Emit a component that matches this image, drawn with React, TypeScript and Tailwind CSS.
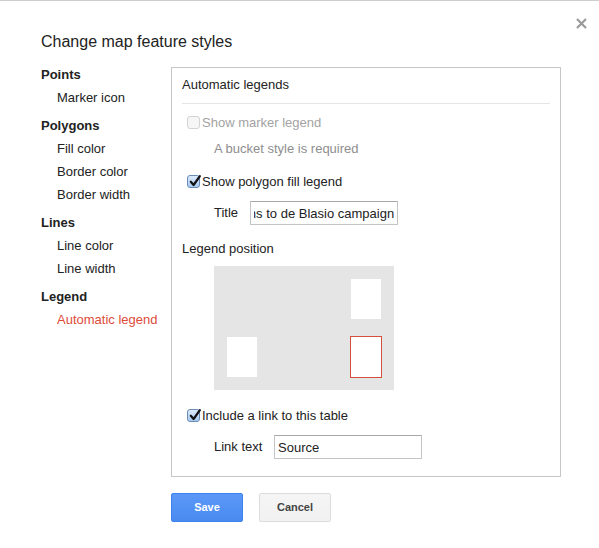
import { useEffect, useRef, type ReactNode } from 'react'

// Left-hand navigation of the style dialog
const NAV: { title: string; items: string[] }[] = [
  { title: 'Points', items: ['Marker icon'] },
  { title: 'Polygons', items: ['Fill color', 'Border color', 'Border width'] },
  { title: 'Lines', items: ['Line color', 'Line width'] },
  { title: 'Legend', items: ['Automatic legend'] },
]
const ACTIVE = 'Automatic legend'

function Check({ checked, disabled }: { checked?: boolean; disabled?: boolean }) {
  if (disabled) {
    return <span className="block h-[13px] w-[13px] rounded-[3px] border border-[#d3d3d3] bg-[#f6f6f6]" />
  }
  return (
    <span className="relative block h-[13px] w-[13px] rounded-[3px] border border-[#6a8bb3] bg-gradient-to-b from-[#dcebfc] to-[#a9cbf2]">
      {checked && (
        <svg viewBox="0 0 13 13" className="absolute -top-[2px] left-[0px] h-[14px] w-[14px]">
          <path d="M2.6 7.2 L5.2 10.2 L11 2" fill="none" stroke="#141414" strokeWidth="2.1" strokeLinecap="round" strokeLinejoin="round" />
        </svg>
      )}
    </span>
  )
}

function CheckRow({ checked, disabled, children }: { checked?: boolean; disabled?: boolean; children: ReactNode }) {
  return (
    <div className={`flex h-[23px] items-center pl-[5px] leading-[23px] ${disabled ? 'text-[#a3a3a3]' : ''}`}>
      <Check checked={checked} disabled={disabled} />
      <span className="ml-[2px]">{children}</span>
    </div>
  )
}

// text input; long values stay scrolled to their end like a field the caret just left
function Field({ label, labelW, value, scrollEnd }: { label: string; labelW: string; value: string; scrollEnd?: boolean }) {
  const ref = useRef<HTMLInputElement>(null)
  useEffect(() => {
    if (scrollEnd && ref.current) ref.current.scrollLeft = ref.current.scrollWidth
  }, [scrollEnd, value])
  return (
    <div className="flex h-[24px] items-center pl-[32px]">
      <span className={labelW}>{label}</span>
      <input
        ref={ref}
        defaultValue={value}
        className="h-[24px] w-[148px] border border-[#c4c4c4] border-t-[#a8a8a8] bg-white px-[3px] text-[13px] text-[#222] outline-none"
      />
    </div>
  )
}

export default function App() {
  return (
    <div
      className="relative h-[548px] w-[599px] border-t border-[#cdcdcd] bg-white text-[13px] text-[#222]"
      style={{ fontFamily: '"Liberation Sans", Arial, sans-serif' }}
    >
      <button className="absolute right-[12px] top-[17px] p-0" aria-label="Close">
        <svg viewBox="0 0 11 11" className="h-[11px] w-[11px]">
          <path d="M1 1 L10 10 M10 1 L1 10" stroke="#9a9a9a" strokeWidth="2.2" />
        </svg>
      </button>

      <div className="pl-[41px] pt-[31px]">
        <h1 className="text-[16px] leading-[20px] font-normal">Change map feature styles</h1>

        <div className="mt-[11px] flex">
          <nav className="w-[130px]">
            {NAV.map((g, i) => (
              <div key={g.title} className={i > 0 ? 'mt-[5px]' : ''}>
                <div className="h-[23px] font-bold leading-[23px]">{g.title}</div>
                {g.items.map((it) => (
                  <div
                    key={it}
                    className={`h-[23px] pl-[16px] leading-[23px] ${it === ACTIVE ? 'text-[#dd4b39]' : ''}`}
                  >
                    {it}
                  </div>
                ))}
              </div>
            ))}
          </nav>

          <div className="mt-[4px]">
            <section className="h-[410px] w-[390px] border border-[#c6c6c6] px-[10px] pt-[5px]">
              <div className="h-[23px] leading-[23px]">Automatic legends</div>
              <div className="mt-[7px] border-t border-[#e6e6e6]" />

              <div className="mt-[7px]">
                <CheckRow disabled>Show marker legend</CheckRow>
              </div>
              <div className="mt-[3px] h-[23px] pl-[32px] leading-[23px] text-[#8e8e8e]">A bucket style is required</div>

              <div className="mt-[10px]">
                <CheckRow checked>Show polygon fill legend</CheckRow>
              </div>
              <div className="mt-[8px]">
                <Field label="Title" labelW="w-[36px]" value="Contributions to de Blasio campaign" scrollEnd />
              </div>

              <div className="mt-[12px] h-[23px] leading-[23px]">Legend position</div>
              <div className="ml-[32px] mt-[6px] grid h-[124px] w-[180px] grid-cols-[30px_30px] grid-rows-[40px_40px] content-between justify-between bg-[#e5e5e5] p-[13px]">
                <div />
                <div className="bg-white" />
                <div className="bg-white" />
                <div className="bg-white outline outline-1 outline-[#d4503c]" />
              </div>

              <div className="mt-[14px]">
                <CheckRow checked>Include a link to this table</CheckRow>
              </div>
              <div className="mt-[8px]">
                <Field label="Link text" labelW="w-[60px]" value="Source" />
              </div>
            </section>

            <div className="mt-[16px] flex gap-[16px]">
              <button className="h-[29px] w-[72px] rounded-[2px] border border-[#3c82f0] bg-gradient-to-b from-[#5b98f7] to-[#4a8af0] text-[11px] font-bold text-white">
                Save
              </button>
              <button className="h-[29px] w-[72px] rounded-[2px] border border-[#dcdcdc] bg-gradient-to-b from-[#f5f5f5] to-[#f1f1f1] text-[11px] font-bold text-[#444]">
                Cancel
              </button>
            </div>
          </div>
        </div>
      </div>
    </div>
  )
}
